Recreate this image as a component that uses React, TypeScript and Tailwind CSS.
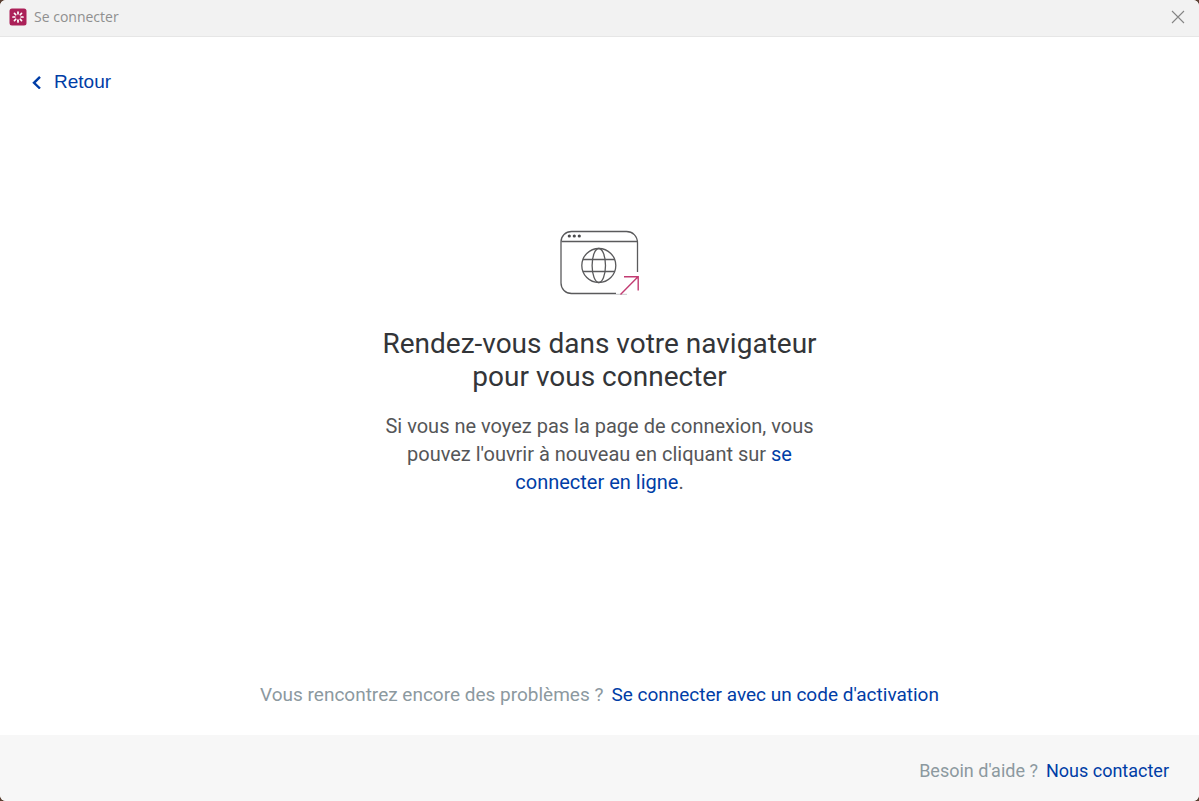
import type { ReactNode } from "react";

function AppLogo() {
  return (
    <svg width="18" height="18" viewBox="0 0 18 18" aria-hidden="true">
      <rect x="0.5" y="0.5" width="17" height="17" rx="2.5" fill="#ab2058" />
      <g stroke="#fff" strokeWidth="1.7" strokeLinecap="round">
        {[0, 45, 90, 135, 180, 225, 270, 315].map((angle) => (
          <path key={angle} d="M9 5.8V4" transform={`rotate(${angle} 9 9)`} />
        ))}
      </g>
    </svg>
  );
}

function BrowserIcon() {
  return (
    <svg width="82" height="66" viewBox="0 0 82 66" fill="none" aria-hidden="true">
      <g stroke="#5a5a5c" strokeWidth="1.3">
        <path d="M78.5 42V13C78.5 6 73.5 1.5 67.5 1.5H12.5C6.5 1.5 2 6 2 12V53C2 59 6.5 63.5 12.5 63.5H57" />
        <path d="M2.5 11.5H78.5" />
        <circle cx="39.8" cy="35.5" r="17" />
        <ellipse cx="39.8" cy="35.5" rx="6.7" ry="17" />
        <path d="M24 29.5H56M24 41.5H56" />
      </g>
      <path d="M57 64.3H68" stroke="#c9c9cb" />
      <g fill="#4a4a4c">
        <circle cx="10.3" cy="6" r="1.6" />
        <circle cx="15.3" cy="6" r="1.6" />
        <circle cx="20.3" cy="6" r="1.6" />
      </g>
      <path d="M61.5 64.5L79 46.7M65 46.7H79.2V60.5" stroke="#c23b72" strokeWidth="1.4" />
    </svg>
  );
}

function TextLink({ children }: { children: ReactNode }) {
  return (
    <a href="#" className="text-[#003da6] hover:underline">
      {children}
    </a>
  );
}

export default function App() {
  return (
    <div className="min-h-screen bg-[#5b4032]">
      <div className="flex min-h-screen flex-col overflow-hidden rounded-md bg-white font-['Roboto',sans-serif]">
        <header className="flex h-[37px] items-center justify-between border-b border-[#e6e6e6] bg-[#f2f2f2] pr-3.5 pb-0.5 pl-[9px]">
          <div className="flex items-center gap-[7px]">
            <AppLogo />
            <span className="font-['Open_Sans',sans-serif] text-sm text-[#8f8f8f]">Se connecter</span>
          </div>
          <button type="button" aria-label="Fermer" className="flex">
            <svg width="14" height="14" viewBox="0 0 14 14" stroke="#858585" strokeWidth="1.1" aria-hidden="true">
              <path d="M1 1L13 13M13 1L1 13" />
            </svg>
          </button>
        </header>

        <main className="flex grow flex-col">
          <div className="flex px-8 pt-[33px]">
            <button type="button" className="flex items-center gap-3 font-['Liberation_Sans',sans-serif] text-[19px] leading-6 text-[#003da6]">
              <svg width="10" height="14" viewBox="0 0 10 14" fill="none" stroke="currentColor" strokeWidth="2.4" aria-hidden="true">
                <path d="M8 1.8L2 7.8L8 13.5" />
              </svg>
              Retour
            </button>
          </div>

          <section className="flex flex-col items-center px-6 pt-[136px] text-center">
            <BrowserIcon />
            <h1 className="mt-[31px] max-w-[450px] text-[28px] leading-[33px] text-[#333538]">
              Rendez-vous dans votre navigateur pour vous connecter
            </h1>
            <p className="mt-[19px] max-w-[440px] text-xl leading-7 text-[#555658]">
              Si vous ne voyez pas la page de connexion, vous pouvez l'ouvrir à nouveau en cliquant sur{" "}
              <TextLink>se connecter en ligne</TextLink>.
            </p>
          </section>

          <p className="mt-auto flex justify-center gap-2 px-6 pb-7 text-[19px] leading-6 text-[#8c999f]">
            Vous rencontrez encore des problèmes ?
            <TextLink>Se connecter avec un code d'activation</TextLink>
          </p>
        </main>

        <footer className="flex h-[66px] items-center justify-end gap-2 bg-[#f7f7f7] px-[30px] pt-1.5 text-lg text-[#8c999f]">
          Besoin d'aide ?
          <TextLink>Nous contacter</TextLink>
        </footer>
      </div>
    </div>
  );
}
